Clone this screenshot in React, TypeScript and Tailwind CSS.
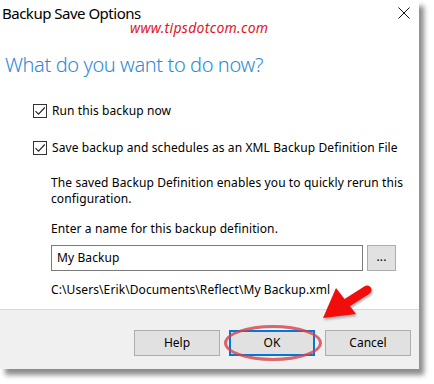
import React from "react";

const font = { fontFamily: '"Noto Sans", "Open Sans", sans-serif' };

function Check() {
  return (
    <div className="w-[14px] h-[14px] border border-[#333333] bg-white flex items-center justify-center shrink-0">
      <svg width="12" height="12" viewBox="0 0 12 12">
        <path d="M1.5 6.2 L4.5 9.2 L10.8 2.5" fill="none" stroke="#222" strokeWidth="1.1" />
      </svg>
    </div>
  );
}

export default function App() {
  return (
    <div className="w-[434px] h-[384px] bg-white relative overflow-hidden" style={font}>
      <div className="w-[419px] h-[369px] bg-white flex flex-col shadow-[5px_6px_5px_rgba(0,0,0,0.45)] relative">
        {/* title bar */}
        <div className="h-[30px] flex items-start justify-between">
          <div className="pl-[2px] pt-[3px] text-[15px] leading-[20px] tracking-[-0.5px] text-black">Backup Save Options</div>
          <svg className="mt-[7px] mr-[9px]" width="12" height="12" viewBox="0 0 12 12">
            <path d="M0.5 0.5 L11.5 11.5 M11.5 0.5 L0.5 11.5" stroke="#111" strokeWidth="1" />
          </svg>
        </div>
        <div className="absolute left-[130px] top-[19px] text-[14px] leading-[18px] italic text-[#e3151f] tracking-[0.3px]">
          www.tipsdotcom.com
        </div>
        {/* body */}
        <div className="flex-1 flex flex-col">
          <div className="pl-[5px] pt-[22px] text-[20px] leading-[26px] font-light tracking-[-0.4px] text-[#2f8ad6]">
            What do you want to do now?
          </div>
          <div className="pl-[33px] pt-[25px] flex flex-col text-[12px] leading-[16px] tracking-[0.1px] text-black">
            <div className="flex items-center gap-[5px] h-[16px]">
              <Check />
              <span>Run this backup now</span>
            </div>
            <div className="flex items-center gap-[5px] h-[16px] mt-[21px]">
              <Check />
              <span>Save backup and schedules as an XML Backup Definition File</span>
            </div>
            <div className="pl-[18px] pt-[19px] flex flex-col">
              <div className="w-[360px]">
                The saved Backup Definition enables you to quickly rerun this configuration.
              </div>
              <div className="mt-[14px]">Enter a name for this backup definition.</div>
              <div className="mt-[8px] flex gap-[4px]">
                <div className="w-[312px] h-[26px] border border-[#7a7a7a] bg-white flex items-center pl-[5px]">
                  My Backup
                </div>
                <div className="w-[29px] h-[26px] border border-[#adadad] bg-[#e1e1e1] flex items-center justify-center pb-[3px]">
                  ...
                </div>
              </div>
              <div className="mt-[11px]">C:\Users\Erik\Documents\Reflect\My Backup.xml</div>
            </div>
          </div>
        </div>
        {/* footer */}
        <div className="h-[60px] bg-[#f0f0f0] border-t border-[#dadada] flex items-start justify-end gap-[4px] pr-[8px] pt-[20px] text-[12px] text-black">
          <div className="w-[86px] h-[26px] border border-[#adadad] bg-[#e1e1e1] flex items-center justify-center">Help</div>
          <div className="relative w-[86px] h-[26px] border-2 border-[#0078d7] bg-[#e1e1e1] flex items-center justify-center ml-[5px]">
            OK
            <div className="absolute left-[-7px] top-[-7px] w-[98px] h-[36px] rounded-[50%] border-[3px] border-[#d9414a]/80" />
          </div>
          <div className="w-[86px] h-[26px] border border-[#adadad] bg-[#e1e1e1] flex items-center justify-center ml-[6px]">Cancel</div>
        </div>
      </div>
      {/* red arrow */}
      <svg className="absolute left-0 top-0 pointer-events-none" width="434" height="384" viewBox="0 0 434 384">
        <g style={{ filter: "drop-shadow(1px 2px 1px rgba(0,0,0,0.3))" }}>
          <line x1="345" y1="304" x2="367" y2="290" stroke="#f20d0d" strokeWidth="9" strokeLinecap="round" />
          <polygon points="323,318 336,288 356,314" fill="#f20d0d" />
        </g>
      </svg>
    </div>
  );
}
